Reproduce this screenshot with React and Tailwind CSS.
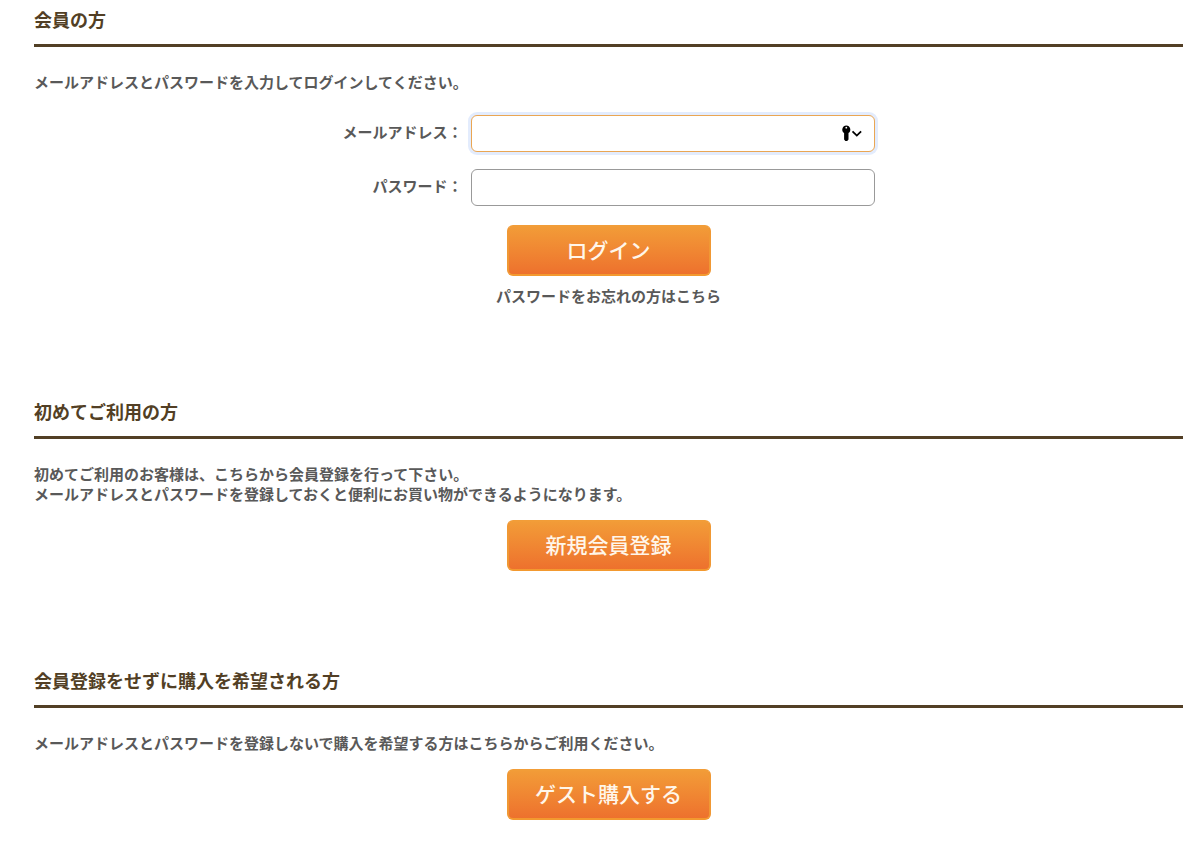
const buttonClass =
  "flex h-[51px] w-[204px] cursor-pointer items-center justify-center rounded-md border-2 border-t-[#f29d38] border-x-[#f09834] border-b-[#f3992f] bg-linear-to-b from-[#f29d38] to-[#ed6f2d] bg-origin-border pb-1 text-[21px] leading-6 font-medium text-[#fff6ea]";

function Section({ title, className, children }) {
  return (
    <section className={className}>
      <h2 className="border-b-3 border-[#523f25] pb-3 text-lg leading-[26px] font-bold text-[#523f25]">
        {title}
      </h2>
      {children}
    </section>
  );
}

function KeyIcon() {
  return (
    <svg width="22" height="18" viewBox="0 0 22 18" fill="none" aria-hidden="true">
      <path
        d="M5.3 0.500a4.100 4.100 0 0 0-2.200 7.500V14.500l1.300 1.500h1.800L7.500 14.500V8A4.100 4.100 0 0 0 5.300 0.500z"
        fill="#000"
      />
      <circle cx="5.300" cy="2.700" r="0.900" fill="#fff" />
      <path d="M11.500 6.300l4.300 4.300L20.100 6.300" stroke="#000" strokeWidth="1.800" />
    </svg>
  );
}

export default function App() {
  return (
    <main className="bg-white pt-1.5 pr-[17px] pb-10 pl-[34px] font-['Noto_Sans_CJK_JP','Liberation_Sans',sans-serif] text-[15px] leading-5 font-bold text-[#595959]">
      <Section title="会員の方">
        <p className="mt-[25px]">メールアドレスとパスワードを入力してログインしてください。</p>
        <form className="mt-[23px] flex flex-col items-center" onSubmit={(e) => e.preventDefault()}>
          <div className="grid grid-cols-[auto_404px] items-center gap-x-2 gap-y-[17px]">
            <label htmlFor="email" className="pb-1 text-right">メールアドレス：</label>
            <div className="relative">
              <input
                id="email"
                type="email"
                className="block h-[37px] w-full rounded-md border border-[#eaa653] bg-white pr-10 pl-2 ring-3 ring-[#e3ecfd] outline-none"
              />
              <span className="pointer-events-none absolute inset-y-0 right-3 flex items-center">
                <KeyIcon />
              </span>
            </div>
            <label htmlFor="password" className="pb-1 text-right">パスワード：</label>
            <input
              id="password"
              type="password"
              className="block h-[37px] w-full rounded-md border border-[#999] bg-white px-2 outline-none"
            />
          </div>
          <button type="submit" className={`mt-[19px] ${buttonClass}`}>ログイン</button>
          <a href="#reminder" className="mt-2.5">パスワードをお忘れの方はこちら</a>
        </form>
      </Section>

      <Section title="初めてご利用の方" className="mt-[92px]">
        <p className="mt-[25px]">
          初めてご利用のお客様は、こちらから会員登録を行って下さい。
          <br />
          メールアドレスとパスワードを登録しておくと便利にお買い物ができるようになります。
        </p>
        <div className="mt-4 flex justify-center">
          <button type="button" className={buttonClass}>新規会員登録</button>
        </div>
      </Section>

      <Section title="会員登録をせずに購入を希望される方" className="mt-24">
        <p className="mt-[25px]">
          メールアドレスとパスワードを登録しないで購入を希望する方はこちらからご利用ください。
        </p>
        <div className="mt-4 flex justify-center">
          <button type="button" className={buttonClass}>ゲスト購入する</button>
        </div>
      </Section>
    </main>
  );
}
